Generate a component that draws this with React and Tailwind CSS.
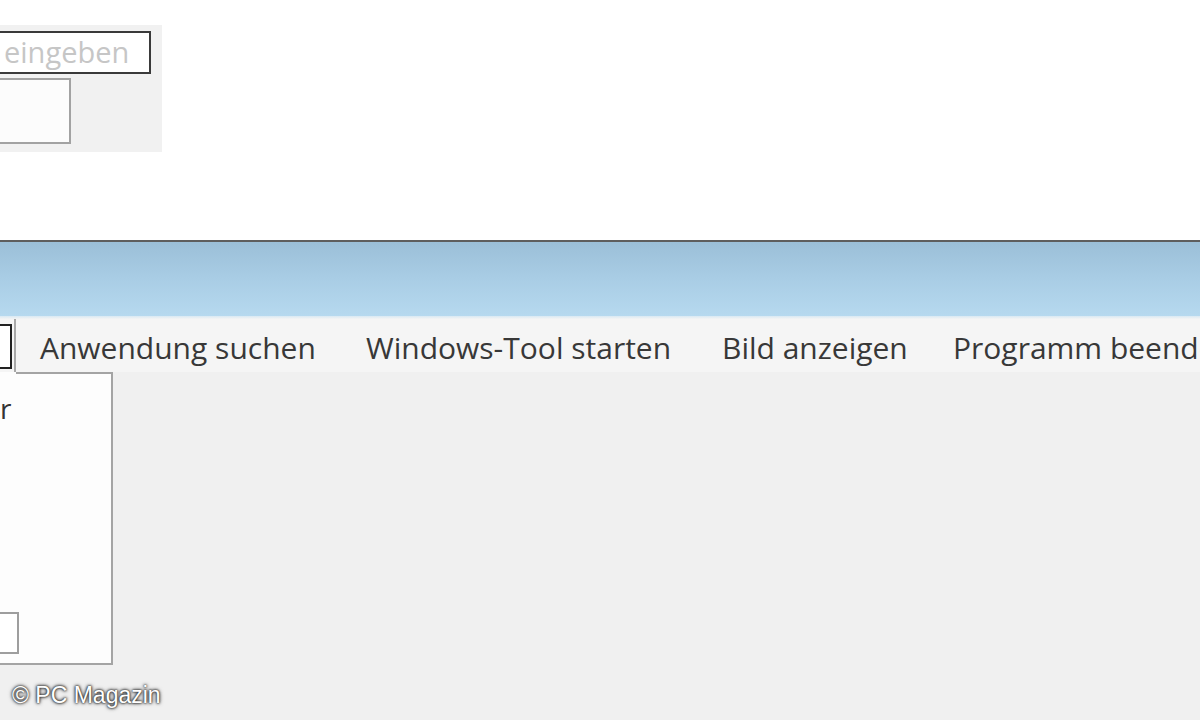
import React from 'react';

const menuItems = [
  { label: 'Anwendung suchen', width: 'w-[326px]' },
  { label: 'Windows-Tool starten', width: 'w-[356px]' },
  { label: 'Bild anzeigen', width: 'w-[231px]' },
  { label: 'Programm beenden', width: 'w-[300px]' },
];

export default function App() {
  return (
    <div
      className="relative w-[1200px] h-[720px] overflow-hidden bg-white"
      style={{ fontFamily: '"Open Sans", "Noto Sans", sans-serif' }}
    >
      {/* Upper form, cut off at the left edge */}
      <div className="h-[240px] pt-[25px]">
        <div className="w-[162px] h-[127px] bg-[#f1f1f1] pt-[6px]">
          <div className="-ml-[10px] w-[161px] h-[43px] border-2 border-[#3a3a3a] bg-white flex items-center pl-[12px]">
            <span className="text-[29px] leading-none text-[#c6c6c6] -mt-[2px]">eingeben</span>
          </div>
          <div className="-ml-[10px] mt-[4px] w-[81px] h-[66px] border-2 border-[#a2a2a2] bg-[#fcfcfc]"></div>
        </div>
      </div>

      {/* Window frame */}
      <div className="h-[2px] bg-[#5e5e5e]"></div>
      <div className="h-[74px] bg-gradient-to-b from-[#9bbfd8] via-[#a9cde5] to-[#b6d9ef]"></div>
      <div className="h-[3px] bg-gradient-to-b from-[#d8e9f3] to-[#f4f4f4]"></div>

      {/* Menu bar */}
      <div className="h-[53px] bg-[#f5f5f5] flex items-stretch overflow-hidden">
        <div className="shrink-0 -ml-[12px] w-[28px] border-r-2 border-[#a8a8a8] pt-[5px] pr-[2px] flex flex-col">
          <div className="h-[45px] border-2 border-[#222] bg-white"></div>
        </div>
        <div className="shrink-0 flex items-center pl-[24px]">
          {menuItems.map((item) => (
            <div key={item.label} className={`${item.width} shrink-0 whitespace-nowrap text-[30px] leading-none text-[#383838] mt-[4px]`}>
              {item.label}
            </div>
          ))}
        </div>
      </div>

      {/* Client area with open dropdown */}
      <div className="h-[349px] bg-[#f0f0f0]">
        <div className="-ml-[4px] w-[117px] h-[293px] border-2 border-t-0 border-[#a4a4a4] bg-[#fdfdfd] flex flex-col">
          <div className="h-[2px] ml-[18px] bg-[#a4a4a4]"></div>
          <div className="pl-[2px] pt-[20px] text-[28px] leading-none text-[#333]">r</div>
          <div className="flex-1"></div>
          <div className="w-[21px] h-[42px] border-2 border-l-0 border-[#9e9e9e] bg-white mb-[9px]"></div>
        </div>
      </div>

      {/* Watermark */}
      <div
        className="absolute left-[12px] top-[684px] text-[23px] leading-none text-white"
        style={{ fontFamily: '"Liberation Sans", Arial, sans-serif', textShadow: '0 0 2px #222, 0 0 3px #333, 0 0 4px #555' }}
      >
        © PC Magazin
      </div>
    </div>
  );
}
